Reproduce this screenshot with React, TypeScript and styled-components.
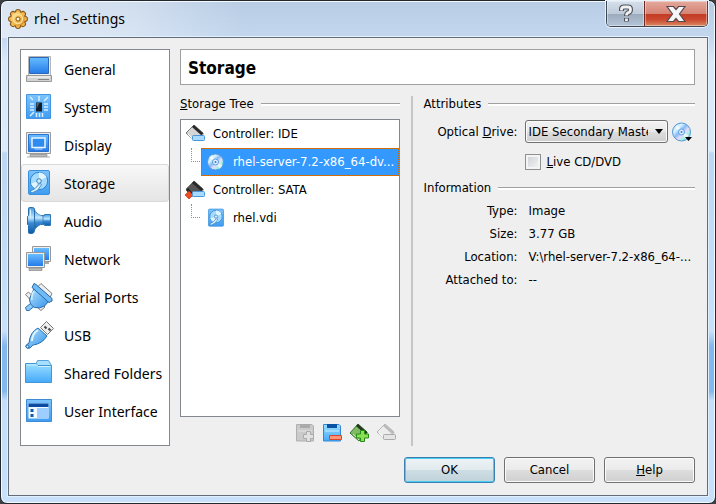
import React, { useState } from "react";
import styled, { createGlobalStyle } from "styled-components";

const uiFont = `"DejaVu Sans Condensed", Tahoma, "Noto Sans", sans-serif`;
const shellFont = `"Segoe UI", "Noto Sans", "Open Sans", sans-serif`;

const GlobalStyle = createGlobalStyle`
  * { box-sizing: border-box; }
  body { margin: 0; background: #3c4043; font: 13px/16px ${uiFont}; color: #000; }
  button, select, input { font: inherit; color: inherit; margin: 0; }
  ul, dl, dd, h1, h2 { margin: 0; padding: 0; font-weight: normal; font-size: inherit; }
  ul { list-style: none; }
  svg { display: block; flex: none; }
`;

const Window = styled.div`
  display: flex;
  flex-direction: column;
  min-height: 100vh;
  padding: 0 7px 7px;
  border: 1px solid #23272e;
  border-radius: 7px;
  box-shadow: inset 0 0 0 1px #f2f9ff;
  background:
    linear-gradient(90deg, rgba(255,255,255,.5) 0, rgba(255,255,255,.35) 130px, transparent 240px) 0 0 / 100% 37px no-repeat,
    linear-gradient(180deg, #b8cce4 0, #c3d7ee 37px, #d9e9fa 60px, #dcebfa 150px, #bcd7f3 152px, #c8e0fa 330px, #83b7ee 345px, #83b7ee 390px, #c5dffa 400px, #c8e0fa 100%);
`;

const TitleBar = styled.header`
  display: flex;
  align-items: center;
  height: 36px;
  font: 14px/20px ${shellFont};
`;

const Title = styled.h1`
  flex: 1;
  margin-left: 6px;
`;

const CaptionButtons = styled.div`
  display: flex;
  align-self: flex-start;
  height: 26px;
  border: 1px solid #3e4754;
  border-top: 0;
  border-radius: 0 0 5px 5px;
  box-shadow: 0 0 0 1px #e8f2fc;
  overflow: hidden;
`;

const CaptionButton = styled.button<{ $close?: boolean }>`
  display: grid;
  place-items: center;
  width: ${(p) => (p.$close ? 63 : 37)}px;
  padding: 0;
  border: 0;
  border-left: ${(p) => (p.$close ? "1px solid #6b2a22" : "0")};
  box-shadow: inset 0 0 0 1px rgba(255, 255, 255, 0.4);
  background: ${(p) =>
    p.$close
      ? "linear-gradient(#e3a99c, #d68475 50%, #c23a22 52%, #cc4a30 75%, #d98a62)"
      : "linear-gradient(#d5dfeb, #bfcbd9 50%, #9cabbc 52%, #b4c5d8)"};
`;

const Client = styled.main`
  flex: 1;
  display: flex;
  flex-direction: column;
  gap: 11px;
  padding: 11px 12px 12px 11px;
  border: 1px solid #626d79;
  box-shadow: 0 0 0 1px #e2f0fd;
  background: #efefef;
`;

const Columns = styled.div`
  flex: 1;
  display: grid;
  grid-template-columns: 150px minmax(0, 1fr);
  gap: 10px;
`;

const CategoryList = styled.ul`
  border: 1px solid #828790;
  background: #fff;
`;

const CategoryButton = styled.button<{ $selected: boolean }>`
  display: flex;
  align-items: center;
  gap: 10px;
  width: 100%;
  height: 38px;
  padding: 0;
  border: 1px solid ${(p) => (p.$selected ? "#d9d9d9" : "transparent")};
  border-radius: 3px;
  background: ${(p) => (p.$selected ? "linear-gradient(#f8f8f8, #e5e5e5)" : "transparent")};
  font: 14px/20px ${shellFont};
  text-align: left;
  white-space: nowrap;
`;

const CategoryName = styled.span`
  padding-top: 2px;
`;

const Page = styled.section`
  display: flex;
  flex-direction: column;
`;

const PageTitle = styled.h2`
  height: 36px;
  padding: 0 7px;
  border: 1px solid #a0a0a0;
  background: #fff;
  font: bold 17px/36px ${uiFont};
`;

const Panes = styled.div`
  flex: 1;
  display: grid;
  grid-template-columns: minmax(0, 220fr) 2px minmax(0, 272fr);
  gap: 11px;
  padding-top: 11px;
`;

const Pane = styled.div`
  display: flex;
  flex-direction: column;
`;

const Divider = styled.div`
  background: #c6c6c6;
`;

const GroupTitle = styled.h2`
  display: flex;
  align-items: center;
  gap: 7px;
  height: 16px;
  &::after {
    content: "";
    flex: 1;
    height: 2px;
    border-top: 1px solid #a0a0a0;
    background: #fff;
  }
`;

const Tree = styled.ul`
  flex: 1;
  margin-top: 7px;
  border: 1px solid #828790;
  background: #fff;
`;

const TreeRow = styled.li`
  display: flex;
  height: 28px;
`;

const TreeLabel = styled.span<{ $selected?: boolean; $child?: boolean }>`
  flex: 1;
  display: flex;
  align-items: center;
  gap: ${(p) => (p.$child ? 7 : 8)}px;
  padding-left: 4px;
  border: 1px ${(p) => (p.$selected ? "dotted #cc6600" : "solid transparent")};
  border-left-width: ${(p) => (p.$child ? 1 : 0)}px;
  background: ${(p) => (p.$selected ? "#3399ff" : "transparent")};
  color: ${(p) => (p.$selected ? "#fff" : "#000")};
  white-space: nowrap;
  overflow: hidden;
`;

const Branch = styled.span`
  width: 9px;
  height: 14px;
  margin-left: 10px;
  margin-right: 1px;
  border-left: 1px dotted #909090;
  border-bottom: 1px dotted #909090;
`;

const ToolBar = styled.div`
  display: flex;
  justify-content: flex-end;
  gap: 7px;
  height: 29px;
  padding: 6px 4px 0 0;
`;

const ToolButton = styled.button`
  height: 20px;
  padding: 0;
  border: 0;
  background: none;
`;

const Field = styled.div`
  display: grid;
  grid-template-columns: 97px minmax(0, 1fr) 23px;
  column-gap: 4px;
  align-items: center;
  margin-top: 8px;
`;

const FieldLabel = styled.label`
  padding-right: 3px;
  text-align: right;
`;

const SelectBox = styled.div`
  display: grid;
  align-items: center;
  > * { grid-area: 1 / 1; }
  > svg { justify-self: end; margin-right: 5px; pointer-events: none; }
`;

const Select = styled.select`
  appearance: none;
  width: 100%;
  height: 23px;
  padding: 0 19px 0 3px;
  border: 1px solid #707070;
  border-radius: 3px;
  box-shadow: inset 0 0 0 1px #fafafa;
  background: linear-gradient(#f2f2f2, #e9e9e9 50%, #dddddd 52%, #cfcfcf);
`;

const CheckField = styled.label`
  grid-column: 2 / -1;
  display: flex;
  align-items: center;
  gap: 6px;
  margin-top: 3px;
`;

const CheckBox = styled.input`
  appearance: none;
  width: 16px;
  height: 16px;
  border: 1px solid #8e8f8f;
  background: linear-gradient(135deg, #cbcfd2, #f6f6f6);
  box-shadow: inset 0 0 0 2px #f4f4f4;
  &:checked { background: #3399ff; }
`;

const InfoTitle = styled(GroupTitle)`
  margin-top: 10px;
`;

const InfoList = styled.dl`
  display: grid;
  grid-template-columns: 94px minmax(0, 1fr);
  gap: 7px 11px;
  margin-top: 7px;
  white-space: nowrap;
  dt { text-align: right; }
`;

const Footer = styled.footer`
  display: flex;
  justify-content: flex-end;
  gap: 9px;
`;

const DialogButton = styled.button<{ $primary?: boolean }>`
  width: 91px;
  height: 26px;
  padding: 0;
  border: 1px solid ${(p) => (p.$primary ? "#3c7fb1" : "#707070")};
  border-radius: 3px;
  box-shadow: inset 0 0 0 1px ${(p) => (p.$primary ? "#48cdf3" : "#fbfbfb")};
  background: ${(p) =>
    p.$primary
      ? "linear-gradient(#edf2f5, #e2ebef 50%, #cddde4 52%, #c0d2da)"
      : "linear-gradient(#f2f2f2, #ebebeb 50%, #dddddd 52%, #cfcfcf)"};
`;

const Gear = () => (
  <svg width="20" height="20" viewBox="0 0 20 20" aria-hidden="true">
    <defs>
      <linearGradient id="blue" x1="0" y1="0" x2="0" y2="1">
        <stop offset="0" stopColor="#68bdff" /><stop offset="1" stopColor="#247be8" />
      </linearGradient>
      <linearGradient id="tile" x1="0" y1="0" x2="0" y2="1">
        <stop offset="0" stopColor="#7cc4fc" /><stop offset="1" stopColor="#3f9cf0" />
      </linearGradient>
      <linearGradient id="sky" x1="0" y1="0" x2="1" y2="1">
        <stop offset="0" stopColor="#b5e3ff" /><stop offset="1" stopColor="#3293e9" />
      </linearGradient>
      <linearGradient id="folder" x1="0" y1="0" x2="0" y2="1">
        <stop offset="0" stopColor="#9adfff" /><stop offset="1" stopColor="#45a9fa" />
      </linearGradient>
      <linearGradient id="cone" x1="0" y1="0" x2="0" y2="1">
        <stop offset="0" stopColor="#4499df" /><stop offset=".4" stopColor="#c3e7ff" />
        <stop offset=".6" stopColor="#398ad4" /><stop offset="1" stopColor="#0c5aa8" />
      </linearGradient>
      <linearGradient id="disc" x1="0" y1="0" x2="1" y2="1">
        <stop offset="0" stopColor="#9fd0ff" /><stop offset=".3" stopColor="#d9f3ff" />
        <stop offset=".45" stopColor="#84baf5" /><stop offset=".6" stopColor="#e8dcff" />
        <stop offset=".75" stopColor="#9df1e0" /><stop offset="1" stopColor="#5a9ee8" />
      </linearGradient>
      <linearGradient id="gold" x1="0" y1="0" x2="1" y2="1">
        <stop offset="0" stopColor="#ffe9a4" /><stop offset=".5" stopColor="#f5b94a" /><stop offset="1" stopColor="#c98118" />
      </linearGradient>
    </defs>
    <path d="M10 3v14M3 10h14M5 5l10 10M15 5L5 15" stroke="#875416" strokeWidth="6" strokeLinecap="round" />
    <circle cx="10" cy="10" r="8" fill="#875416" />
    <path d="M10 3v14M3 10h14M5 5l10 10M15 5L5 15" stroke="#efb851" strokeWidth="4" strokeLinecap="round" />
    <circle cx="10" cy="10" r="7" fill="url(#gold)" />
    <circle cx="10" cy="10" r="4.500" fill="none" stroke="#fbdf9c" strokeWidth="1.500" />
    <circle cx="10" cy="10" r="2" fill="#fff6dc" stroke="#875416" />
  </svg>
);

const glyphs: Record<string, React.ReactNode> = {
  General: (
    <>
      <path d="M6.500 3.500h22v19h-22z" fill="#eee" stroke="#b5b5b5" />
      <path d="M7.500 4.500h19v16h-19z" fill="url(#blue)" stroke="#2a68be" />
      <path d="M4.500 22.500h25v6h-25z" fill="#d2d2d2" stroke="#999" />
      <path d="M6 24h22" stroke="#fff" /><path d="M16 26.500h11" stroke="#858585" />
    </>
  ),
  System: (
    <>
      <path d="M4.500 3.500h24v24h-24z" fill="url(#tile)" stroke="#4295e4" />
      <path d="M14 11.500h6v9h-6z" fill="#111f2c" /><path d="M14.500 12v6l3-6z" fill="#52606b" />
      <path d="M17 5v5M22 10l4-4M8 6l3 3M22 13h4M22 16h4M22 19h4M8 13h4M8 16h4M8 19h4M8 25l4-4M14.500 22v4M17.500 22v4M20.500 22v4" stroke="#d9efff" strokeWidth="1.500" />
    </>
  ),
  Display: (
    <>
      <path d="M4.500 3.500h24v21h-24z" fill="#eee" stroke="#9b9b9b" />
      <path d="M6.500 5.500h20v17h-20z" fill="url(#blue)" stroke="#2d70d0" />
      <path d="M10 9h13v9.500H10z" fill="#2e8bf0" stroke="#e8f6ff" strokeWidth="1.500" />
      <path d="M12.500 20h8" stroke="#b8ddff" />
      <path d="M8 25.500h17v2H8z" fill="#bbb" stroke="#888" strokeWidth=".7" /><path d="M5 28h23" stroke="#aaa" />
    </>
  ),
  Storage: (
    <>
      <rect x="6.500" y="3.500" width="21" height="24" rx="1.500" fill="url(#tile)" stroke="#3990dd" />
      <circle cx="17" cy="14" r="8.700" fill="#a6dbff" stroke="#2e83d0" />
      <path d="M17 14V5.500a8.500 8.500 0 0 1 7.500 4.500zM17 14l-4 7.500a8.500 8.500 0 0 1-4-5z" fill="#e1f5ff" />
      <circle cx="17" cy="14" r="2.300" fill="#d2eeff" stroke="#367fba" />
      <path d="M8 24.500l5-3 5-5 1.500 1-3.500 5.500-6 3z" fill="#d7f0ff" stroke="#347eb6" strokeWidth=".8" />
    </>
  ),
  Audio: (
    <>
      <path d="M19 10.500h3.500v-1h6v11h-6v-1H19z" fill="url(#cone)" stroke="#3278b7" />
      <path d="M12 4c2 4 5 6.500 9 7v8c-4 .5-7 3-9 7z" fill="url(#cone)" stroke="#2b74b4" strokeWidth=".7" />
      <path d="M6.500 3.500q0-1 1-1h3q2 0 2 2v21q0 2.500-2.500 3H7.500q-1 0-1-1v-7l-1-1v-8l1-1z" fill="url(#cone)" stroke="#276fad" />
      <path d="M8.500 4.500v8" stroke="#d9f2ff" />
    </>
  ),
  Network: (
    <>
      <path d="M10.500 3.500h18v15h-18z" fill="#eee" stroke="#989898" /><path d="M12 5h15v12H12z" fill="url(#blue)" />
      <path d="M18 19h9v2h-9z" fill="#aaa" />
      <path d="M4.500 9.500h18v15h-18z" fill="#eee" stroke="#989898" /><path d="M6 11h15v12H6z" fill="url(#blue)" />
      <path d="M7 25h13v2.500H7z" fill="#bbb" stroke="#888" strokeWidth=".7" />
    </>
  ),
  "Serial Ports": (
    <>
      <path d="M15 6.500l4-4 11 10-2 4zM3.500 13.500l3-2.500 3 3-2 4zM16 27l4-4 3 3-4 3.500z" fill="#eee" stroke="#808080" />
      <path d="M8.500 22.500l-5 4 1 3h2.500l5-4" fill="#88c9fa" stroke="#2a70b0" />
      <path d="M12.500 6.500l15 13-5 5.500q-5 3-10 1.500-5-3-5-8.500z" fill="url(#sky)" stroke="#286eb2" />
      <path d="M12 2.500l2 1 16 14v2.500l-3 1.500L10 6.500z" fill="#6fbcf6" stroke="#2869a5" />
      <path d="M12 10q-3 4-2 9" stroke="#d9f3ff" strokeWidth="1.500" fill="none" />
    </>
  ),
  USB: (
    <>
      <path d="M18.500 8.500l6-6 7 7-6 6z" fill="#eee" stroke="#777" />
      <path d="M22.500 7.500l2 2M26.500 9.500l2 2" stroke="#444" strokeWidth="2" />
      <path d="M16 9l9 8q-5 8-14 9l-3 3q-3 1-4-1t3-4Q8 13 16 9z" fill="url(#sky)" stroke="#286eb2" />
      <path d="M16 11q-6 4-6 11" fill="none" stroke="#dff5ff" strokeWidth="2" />
      <circle cx="5.500" cy="27.500" r="1.500" fill="#c7ebff" stroke="#1863a8" />
    </>
  ),
  "Shared Folders": (
    <>
      <path d="M13.500 8l2-4.500h11l2.500 4v3h-16z" fill="#a7dfff" stroke="#58a4da" />
      <path d="M3.500 6.500H14l2 2h13.500v17h-26z" fill="url(#folder)" stroke="#4196d8" />
      <path d="M4.500 8h10l2 1.500h12" stroke="#caf0ff" fill="none" />
    </>
  ),
  "User Interface": (
    <>
      <path d="M4.500 4.500h25v22h-25z" fill="url(#tile)" stroke="#3e8bd4" />
      <path d="M6.500 8.500h20v15h-20z" fill="#f3faff" /><path d="M6.500 8.500h20v3.500h-20z" fill="#0a4aa0" />
      <path d="M15 13h11.500v10.500H15z" fill="#9dceff" />
      <path d="M8.500 14h3v3h-3zM8.500 19h3v3h-3z" fill="#1257ac" />
    </>
  ),
};

const CategoryIcon = ({ name }: { name: string }) => (
  <svg width="32" height="32" viewBox="0 0 32 32" aria-hidden="true">{glyphs[name]}</svg>
);

const ControllerIcon = ({ dark, muted }: { dark?: boolean; muted?: boolean }) => (
  <svg width="20" height="20" viewBox="0 0 20 20" aria-hidden="true">
    <path d="M1 9L9 1l9 8-8 8z" fill={dark ? "#555" : muted ? "#ededed" : "#d5d5d5"} stroke={muted ? "#b7b7b7" : "#777"} />
    <path d="M9 1l10 9-3 1-9-8z" fill={muted ? "#bbb" : "#292929"} />
    {dark && <path d="M2 9l6 7" stroke="#222" strokeWidth="3" />}
    <path d="M3 10l6 6" stroke={dark ? "#333" : "#fff"} />
    {dark && <path d="M0 15l4-4 4 4-4 4z" fill="#ed4b22" stroke="#bf3212" strokeWidth=".7" />}
    <rect x="7.500" y="11.500" width="12" height="5" rx="1" fill={muted ? "#e5e5e5" : "#a9d9ff"} stroke={muted ? "#aaa" : "#4a96db"} />
  </svg>
);

const DiscIcon = ({ menu }: { menu?: boolean }) => (
  <svg width="20" height="20" viewBox="0 0 20 20" overflow="visible" aria-hidden="true">
    <circle cx="9.500" cy="10" r={menu ? 9 : 8} fill="url(#disc)" stroke="#5798d5" />
    <path d="M9.500 10L3 6a8 8 0 0 1 3-3zM9.500 10l7 3a8 8 0 0 1-3 4z" fill="#fff" opacity=".65" />
    <circle cx="9.500" cy="10" r="3" fill="#dceeff" stroke="#5c9de0" />
    <circle cx="9.500" cy="10" r="1" fill="#347dcc" />
    {menu && <path d="M13 15h7l-3.500 4z" fill="#000" />}
  </svg>
);

const DriveIcon = () => (
  <svg width="20" height="20" viewBox="3 2 28 28" aria-hidden="true">{glyphs.Storage}</svg>
);

const FloppyIcon = ({ muted }: { muted?: boolean }) => (
  <svg width="20" height="20" viewBox="0 0 20 20" aria-hidden="true">
    <path d="M1.500 1.500H17l1.500 1.500v15h-17z" fill={muted ? "#cacaca" : "url(#folder)"} stroke={muted ? "#b0b0b0" : "#3288d8"} />
    <path d="M5 1h10v4H5z" fill={muted ? "#aaa" : "#0952a4"} />
    <path d="M3 8h14" stroke={muted ? "#e4e4e4" : "#c4edff"} />
    {muted
      ? <path d="M11.500 8.500h4v3h3v4h-3v3h-4v-3h-3v-4h3z" fill="#e1e1e1" stroke="#aaa" />
      : <path d="M7.500 12.500h12v4h-12z" fill="#ff9479" stroke="#d6492a" />}
  </svg>
);

const AddControllerIcon = () => (
  <svg width="20" height="20" viewBox="0 0 20 20" aria-hidden="true">
    <path d="M1 10l8-9 9 8-8 9z" fill="#80ba65" stroke="#39762a" /><path d="M9 1l10 9-3 1-9-8z" fill="#26371f" />
    <path d="M4 11l6 6" stroke="#c7eeb5" />
    <path d="M11.500 7.500h4v3.500h4v4h-4v3.500h-4V15h-4v-4h4z" fill="#8bdf52" stroke="#268c17" />
  </svg>
);

const tools = [
  { label: "Add attachment", icon: <FloppyIcon muted />, disabled: true },
  { label: "Remove attachment", icon: <FloppyIcon /> },
  { label: "Add controller", icon: <AddControllerIcon /> },
  { label: "Remove controller", icon: <ControllerIcon muted />, disabled: true },
];

const info = [
  ["Type:", "Image"],
  ["Size:", "3.77 GB"],
  ["Location:", "V:\\rhel-server-7.2-x86_64-..."],
  ["Attached to:", "--"],
];

export default function App() {
  const [category, setCategory] = useState("Storage");
  return (
    <>
      <GlobalStyle />
      <Window>
        <TitleBar>
          <Gear />
          <Title>rhel - Settings</Title>
          <CaptionButtons>
            <CaptionButton aria-label="Context help">
              <svg width="18" height="20" viewBox="0 0 18 20" fill="none">
                <path d="M4.500 7V5q0-2 2.500-2h4q2.500 0 2.500 2.500t-2 3.200q-2 .6-2 3.300M9.500 14v3.500" stroke="#4b525d" strokeWidth="5" />
                <path d="M4.500 6.500V5q0-2 2.500-2h4q2.500 0 2.500 2.500t-2 3.200q-2 .6-2 2.800M9.500 14.500v2.500" stroke="#f2f2f2" strokeWidth="2.800" />
              </svg>
            </CaptionButton>
            <CaptionButton $close aria-label="Close">
              <svg width="20" height="18" viewBox="0 0 20 18">
                <path d="M1 1.500h6.500L10 4.500l2.500-3H19L13.500 9l5.500 7.500h-6.500l-2.500-3-2.500 3H1L6.500 9z" fill="#f5f5f5" stroke="#574951" strokeWidth="1.200" />
              </svg>
            </CaptionButton>
          </CaptionButtons>
        </TitleBar>
        <Client>
          <Columns>
            <CategoryList>
              {Object.keys(glyphs).map((name) => (
                <li key={name}>
                  <CategoryButton $selected={name === category} onClick={() => setCategory(name)}>
                    <CategoryIcon name={name} />
                    <CategoryName>{name}</CategoryName>
                  </CategoryButton>
                </li>
              ))}
            </CategoryList>
            <Page>
              <PageTitle>Storage</PageTitle>
              <Panes>
                <Pane>
                  <GroupTitle><span><u>S</u>torage Tree</span></GroupTitle>
                  <Tree role="tree" aria-label="Storage Tree">
                    <TreeRow role="treeitem"><TreeLabel><ControllerIcon />Controller: IDE</TreeLabel></TreeRow>
                    <TreeRow role="treeitem" aria-selected="true">
                      <Branch />
                      <TreeLabel $child $selected><DiscIcon />rhel-server-7.2-x86_64-dv...</TreeLabel>
                    </TreeRow>
                    <TreeRow role="treeitem"><TreeLabel><ControllerIcon dark />Controller: SATA</TreeLabel></TreeRow>
                    <TreeRow role="treeitem">
                      <Branch />
                      <TreeLabel $child><DriveIcon />rhel.vdi</TreeLabel>
                    </TreeRow>
                  </Tree>
                  <ToolBar>
                    {tools.map((t) => (
                      <ToolButton key={t.label} aria-label={t.label} disabled={t.disabled}>{t.icon}</ToolButton>
                    ))}
                  </ToolBar>
                </Pane>
                <Divider />
                <Pane>
                  <GroupTitle>Attributes</GroupTitle>
                  <Field>
                    <FieldLabel htmlFor="drive">Optical <u>D</u>rive:</FieldLabel>
                    <SelectBox>
                      <Select id="drive"><option>IDE Secondary Master</option></Select>
                      <svg width="8" height="5" viewBox="0 0 8 5" aria-hidden="true"><path d="M0 0h8L4 5z" /></svg>
                    </SelectBox>
                    <ToolButton aria-label="Choose disk"><DiscIcon menu /></ToolButton>
                  </Field>
                  <Field>
                    <CheckField htmlFor="live">
                      <CheckBox type="checkbox" id="live" />
                      <span><u>L</u>ive CD/DVD</span>
                    </CheckField>
                  </Field>
                  <InfoTitle>Information</InfoTitle>
                  <InfoList>
                    {info.map(([k, v]) => (
                      <React.Fragment key={k}><dt>{k}</dt><dd>{v}</dd></React.Fragment>
                    ))}
                  </InfoList>
                </Pane>
              </Panes>
            </Page>
          </Columns>
          <Footer>
            <DialogButton $primary>OK</DialogButton>
            <DialogButton>Cancel</DialogButton>
            <DialogButton><u>H</u>elp</DialogButton>
          </Footer>
        </Client>
      </Window>
    </>
  );
}
